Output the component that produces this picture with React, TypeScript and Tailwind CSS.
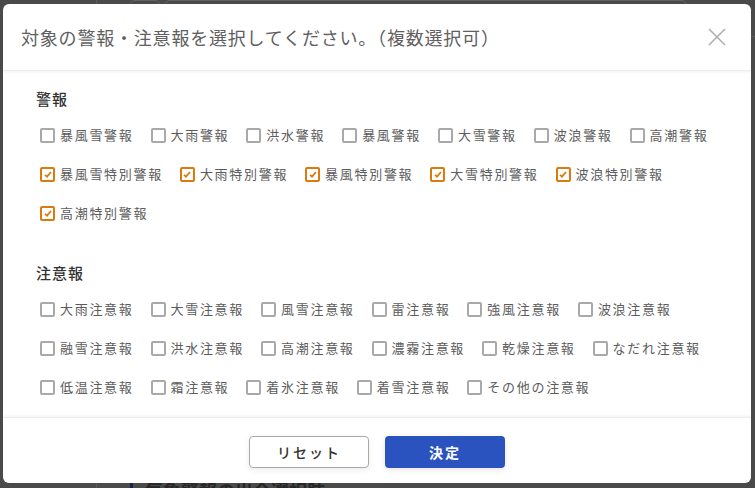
import React from "react";

const FONT = { fontFamily: '"Noto Sans CJK JP", "Noto Sans", sans-serif' };

const keiho: { label: string; checked: boolean }[] = [
  { label: "暴風雪警報", checked: false },
  { label: "大雨警報", checked: false },
  { label: "洪水警報", checked: false },
  { label: "暴風警報", checked: false },
  { label: "大雪警報", checked: false },
  { label: "波浪警報", checked: false },
  { label: "高潮警報", checked: false },
  { label: "暴風雪特別警報", checked: true },
  { label: "大雨特別警報", checked: true },
  { label: "暴風特別警報", checked: true },
  { label: "大雪特別警報", checked: true },
  { label: "波浪特別警報", checked: true },
  { label: "高潮特別警報", checked: true },
];

const chuiho = [
  "大雨注意報",
  "大雪注意報",
  "風雪注意報",
  "雷注意報",
  "強風注意報",
  "波浪注意報",
  "融雪注意報",
  "洪水注意報",
  "高潮注意報",
  "濃霧注意報",
  "乾燥注意報",
  "なだれ注意報",
  "低温注意報",
  "霜注意報",
  "着氷注意報",
  "着雪注意報",
  "その他の注意報",
].map((label) => ({ label, checked: false }));

function Check({ label, checked }: { label: string; checked: boolean }) {
  return (
    <label className="flex items-center h-5">
      <span
        className={
          checked
            ? "w-[15px] h-[15px] rounded-[2px] border-2 border-[#dc7a10] flex items-center justify-center bg-white"
            : "w-[15px] h-[15px] rounded-[2px] border-2 border-[#a9a9a9] bg-white"
        }
      >
        {checked && (
          <svg width="8" height="7" viewBox="0 0 8 7">
            <path d="M1 3.8 L3 5.6 L7 1" fill="none" stroke="#dc7a10" strokeWidth="1.8" />
          </svg>
        )}
      </span>
      <span className="ml-[5px] text-[13px] tracking-[1.7px] text-[#5c5c5c] leading-5">{label}</span>
    </label>
  );
}

function Section({ title, items }: { title: string; items: { label: string; checked: boolean }[] }) {
  return (
    <div>
      <div className="text-[15px] tracking-[1px] font-medium text-[#333] leading-5">{title}</div>
      <div className="mt-4 ml-1 flex flex-wrap gap-x-[17px] gap-y-[19px]">
        {items.map((it) => (
          <Check key={it.label} label={it.label} checked={it.checked} />
        ))}
      </div>
    </div>
  );
}

export default function App() {
  return (
    <div className="relative w-[755px] h-[488px] overflow-hidden bg-[#4a4a4a]" style={FONT}>
      {/* background page (dimmed) */}
      <div className="flex h-full">
        <div className="w-[97px] border-r border-[#5a5a5a]" />
        <div className="flex-1 flex flex-col">
          <div className="h-[37px] border-b border-[#5a5a5a] flex gap-[5px] pl-[33px]">
            <div className="w-[30px] h-[30px] rounded-[5px] border border-[#626262]" />
            <div className="w-[522px] h-[30px] rounded-[5px] border border-[#626262]" />
          </div>
          <div className="flex-1" />
          <div className="flex items-center h-[20px] mb-[-12px] pl-[33px]">
            <div className="w-[3px] h-[20px] bg-[#17224a]" />
            <div className="ml-3 text-[18px] font-bold text-[#262626]">気象警報の出令選択肢</div>
          </div>
        </div>
      </div>

      {/* modal */}
      <div className="absolute inset-0 pt-[4px] pl-[3px] pr-[4px] pb-[5px] flex">
        <div className="flex-1 bg-white rounded-[6px] flex flex-col overflow-hidden">
          <div className="h-[67px] flex items-center justify-between pl-[18px] pr-[25px] border-b border-[#ececec] shadow-[0_1px_3px_rgba(0,0,0,0.06)] relative z-10">
            <div className="text-[18px] tracking-[0.8px] text-[#606060] font-normal">
              対象の警報・注意報を選択してください。（複数選択可）
            </div>
            <svg width="18" height="18" viewBox="0 0 18 18">
              <path d="M1 1 L17 17 M17 1 L1 17" stroke="#acacac" strokeWidth="1.5" />
            </svg>
          </div>
          <div className="flex-1 pt-[18px] pl-[33px] pr-[33px]">
            <Section title="警報" items={keiho} />
            <div className="h-10" />
            <Section title="注意報" items={chuiho} />
          </div>
          <div className="h-[66px] border-t border-[#ececec] shadow-[0_-1px_3px_rgba(0,0,0,0.06)] flex justify-center gap-4 pt-[18px]">
            <button className="w-[120px] h-[32px] rounded-[4px] border border-[#a8a8a8] bg-white text-[14px] font-medium tracking-[2px] text-[#333] shadow-[0_2px_6px_rgba(0,0,0,0.08)]">
              リセット
            </button>
            <button className="w-[120px] h-[32px] rounded-[4px] bg-[#2b53bf] text-[14px] font-bold tracking-[2px] text-white shadow-[0_2px_6px_rgba(0,0,0,0.1)]">
              決定
            </button>
          </div>
        </div>
      </div>
    </div>
  );
}
